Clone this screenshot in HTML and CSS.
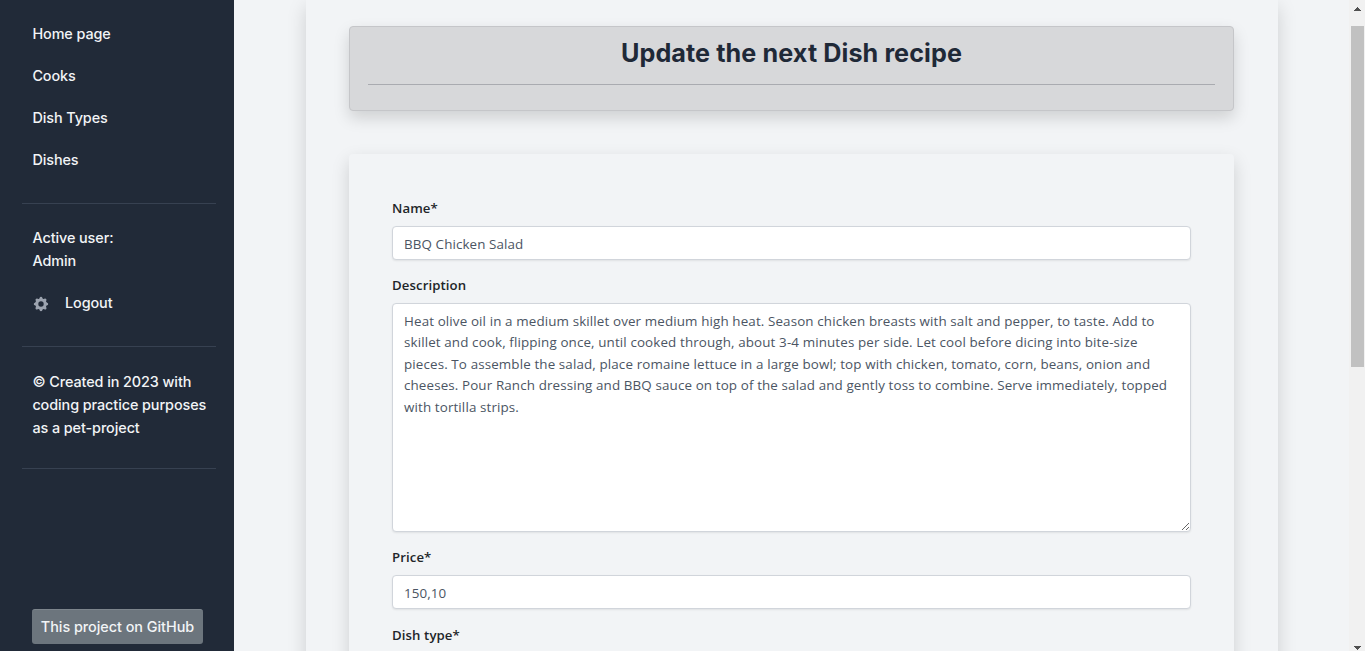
FILE: index.html
```html
<!DOCTYPE html>
<html lang="en">
<head>
<meta charset="utf-8">
<title>Update Dish</title>
<link rel="stylesheet" href="styles.css">
</head>
<body>
<div class="app">
  <nav class="sidebar">
    <ul class="menu">
      <li>Home page</li>
      <li>Cooks</li>
      <li>Dish Types</li>
      <li>Dishes</li>
    </ul>
    <div class="divider"></div>
    <div class="user">Active user:<br>Admin</div>
    <div class="logout">
      <svg class="gear" viewBox="0 0 20 20" fill="currentColor"><path fill-rule="evenodd" d="M11.49 3.17c-.38-1.56-2.6-1.56-2.98 0a1.532 1.532 0 01-2.286.948c-1.372-.836-2.942.734-2.106 2.106.54.886.061 2.042-.947 2.287-1.561.379-1.561 2.6 0 2.978a1.532 1.532 0 01.947 2.287c-.836 1.372.734 2.942 2.106 2.106a1.532 1.532 0 012.287.947c.379 1.561 2.6 1.561 2.978 0a1.533 1.533 0 012.287-.947c1.372.836 2.942-.734 2.106-2.106a1.533 1.533 0 01.947-2.287c1.561-.379 1.561-2.6 0-2.978a1.532 1.532 0 01-.947-2.287c.836-1.372-.734-2.942-2.106-2.106a1.532 1.532 0 01-2.287-.947zM10 13a3 3 0 100-6 3 3 0 000 6z" clip-rule="evenodd"/></svg>
      <span>Logout</span>
    </div>
    <div class="divider"></div>
    <div class="credits">© Created in 2023 with<br>coding practice purposes<br>as a pet-project</div>
    <div class="divider"></div>
    <a class="github">This project on GitHub</a>
  </nav>
  <main class="content">
    <section class="panel">
      <header class="title-card">
        <h1>Update the next Dish recipe</h1>
        <div class="rule"></div>
      </header>
      <form class="form-card">
        <label for="name">Name*</label>
        <input id="name" class="control" type="text" value="BBQ Chicken Salad">
        <label for="description">Description</label>
        <textarea id="description" class="control area" spellcheck="false">Heat olive oil in a medium skillet over medium high heat. Season chicken breasts with salt and pepper, to taste. Add to skillet and cook, flipping once, until cooked through, about 3-4 minutes per side. Let cool before dicing into bite-size pieces. To assemble the salad, place romaine lettuce in a large bowl; top with chicken, tomato, corn, beans, onion and cheeses. Pour Ranch dressing and BBQ sauce on top of the salad and gently toss to combine. Serve immediately, topped with tortilla strips.</textarea>
        <label for="price">Price*</label>
        <input id="price" class="control last" type="text" value="150,10">
        <label>Dish type*</label>
      </form>
    </section>
  </main>
  <div class="scrollbar">
    <svg class="arrow" viewBox="0 0 7 4" shape-rendering="crispEdges"><path d="M3 0h1v1h1v1h1v1h1v1H0V3h1V2h1V1h1z"/></svg>
    <div class="thumb"></div>
    <svg class="arrow down" viewBox="0 0 7 4" shape-rendering="crispEdges"><path d="M0 0h7v1H6v1H5v1H4v1H3V3H2V2H1V1H0z"/></svg>
  </div>
</div>
</body>
</html>
```
FILE: styles.css
```css
* { box-sizing: border-box; }
body { margin: 0; background: #f2f4f6; overflow: hidden; font-family: Inter, sans-serif; }
.app { display: flex; height: 651px; overflow: hidden; }
.sidebar {
  width: 234px; flex: none; background: #212a38; color: #f2f4f6;
  padding: 12px 18px 7px 22px; display: flex; flex-direction: column;
  font-size: 14.4px; line-height: 23px; font-weight: 500; letter-spacing: -.08px;
}
.menu { list-style: none; margin: 0; padding: 0; }
.menu li { height: 42px; padding: 10px 10px 0 10.4px; }
.divider { height: 1px; background: #374151; flex: none; }
.menu + .divider { margin-top: 23px; }
.user { padding: 22px 0 0 10.4px; }
.logout { display: flex; align-items: center; padding: 19px 10px 0; height: 42px; margin-bottom: 32px; }
.logout span { margin-left: 15px; }
.gear { width: 18px; height: 18px; color: #9ca3af; position: relative; top: 1px; }
.credits { padding: 23px 0 29px 10.4px; white-space: nowrap; }
.github {
  margin: auto 0 0 10px; width: 171px; height: 35px; border-radius: 3px;
  background: #6c757d; border-top: 1px solid #7d858c; text-align: center;
  line-height: 33px; white-space: nowrap; letter-spacing: -.03px;
}
.content { flex: 1; min-width: 0; padding: 0 71px 0 72px; overflow: hidden; }
.panel { height: 760px; padding: 26px 44px 0 43px; box-shadow: 0 7px 18px rgba(0,0,0,.15); }
.title-card {
  height: 85px; padding: 9px 18px 0; text-align: center; background: #d7d8da;
  border: 1px solid #c5c6c9; border-radius: 4px; box-shadow: 0 7px 16px rgba(0,0,0,.15);
}
.title-card h1 { margin: 0; font-size: 25.2px; line-height: 34px; font-weight: 700; letter-spacing: .08px; color: #1f2937; }
.rule { height: 1px; margin-top: 14px; background: #a9abb0; }
.form-card {
  margin-top: 43px; height: 620px; padding: 43px; border-radius: 4px; background: #f2f4f6;
  display: flex; flex-direction: column; box-shadow: 0 7px 18px rgba(0,0,0,.15);
  font-family: "Open Sans", sans-serif; color: #212529;
}
label { height: 22px; margin-bottom: 7px; font-size: 13.2px; line-height: 22px; font-weight: 600; letter-spacing: .1px; }
.control {
  width: 100%; height: 34px; margin: 0 0 14px; padding: 7px 11px 5px; border: 1px solid #d1d5db;
  border-radius: 4px; background: #fff; color: #4b5563; outline: none;
  font: 13.4px/21.6px "Open Sans", sans-serif; letter-spacing: .1px; box-shadow: 0 1px 2px rgba(0,0,0,.08);
}
.last { margin-bottom: 15px; }
.area { height: 229px; overflow: hidden; resize: vertical; letter-spacing: .12px; padding-top: 6.6px; }
.scrollbar { width: 16px; flex: none; background: #f1f1f1; display: flex; flex-direction: column; align-items: center; padding: 7px 0 1px; }
.arrow { width: 7px; height: 4px; fill: #505050; flex: none; }
.thumb { width: 13px; height: 341px; margin-top: 15px; background: #c1c1c1; }
.down { margin-top: auto; }
```
